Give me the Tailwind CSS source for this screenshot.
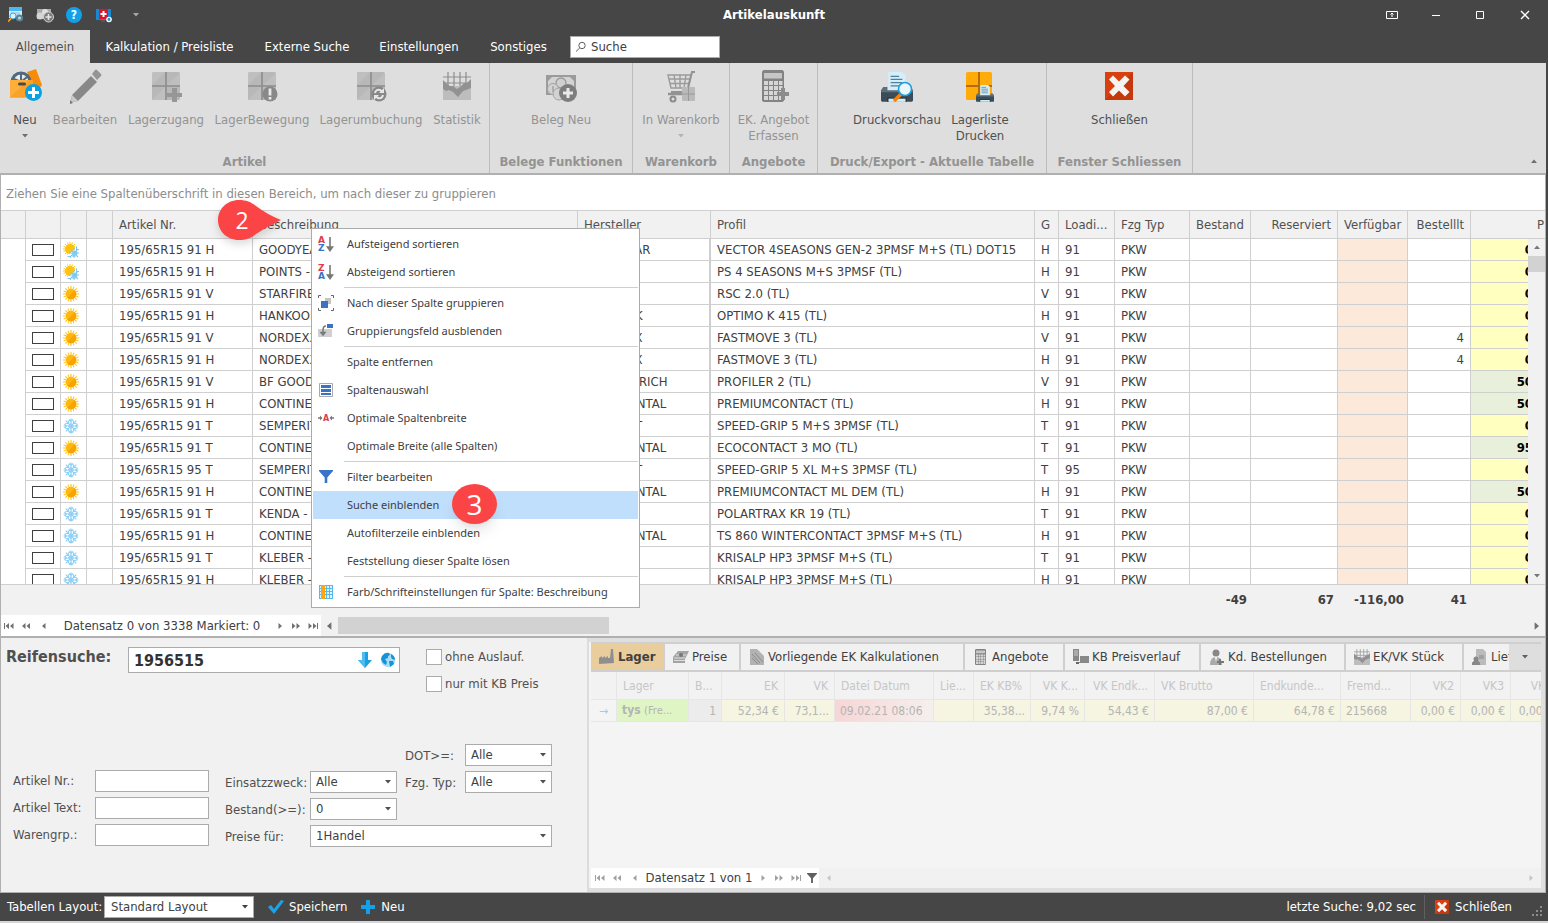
<!DOCTYPE html>
<html lang="de">
<head>
    <meta charset="UTF-8">
    <meta name="viewport" content="width=device-width, initial-scale=1.0">
    <title>Artikelauskunft</title>
    <script src="https://cdn.jsdelivr.net/npm/@tailwindcss/browser@4"></script>
</head>
<body class="flex h-screen flex-col overflow-hidden bg-[#464646] font-['DejaVu_Sans_Condensed','DejaVu_Sans',sans-serif] text-[13px] leading-4 text-[#404040]">

<!-- icon set -->
<svg class="hidden">
    <symbol id="caret" viewBox="0 0 8 4"><path d="M1 0h6L4 3.5z" fill="currentColor"/></symbol>
    <symbol id="sun" viewBox="0 0 16 16">
        <path d="M8 0v16M0 8h16M2.3 2.3l11.4 11.4M13.7 2.3L2.3 13.7M5 .6l6 14.8M11 .6L5 15.4M.6 5l14.8 6M15.4 5L.6 11" stroke="#ffc41c" stroke-width="1.1"/>
        <circle cx="8" cy="8" r="5.2" fill="#ffb80f"/><path d="M11.7 4.3a5.2 5.2 0 0 1-7.4 7.4z" fill="#f7a400"/>
    </symbol>
    <symbol id="flake" viewBox="0 0 16 16">
        <path d="M8 .5v15M.5 8h15M2.7 2.7l10.6 10.6M13.3 2.7L2.7 13.3M6 1.5l2 2 2-2M6 14.500l2-2 2 2M1.500 6l2 2-2 2M14.500 6l-2 2 2 2M2.500 5.500h3v-3M13.500 5.500h-3v-3M2.500 10.500h3v3M13.500 10.500h-3v3" stroke="#8fd0f5" stroke-width="1.200" fill="none"/>
        <circle cx="8" cy="8" r="2.200" fill="none" stroke="#8fd0f5"/>
    </symbol>
    <symbol id="allyear" viewBox="0 0 16 16">
        <path d="M7 0v12M0 7h12M2 2l9 9M12 2L2 12M4.500 .5l4 11M9.500 .5l-5 12M.5 4.500l11 4M.5 9.500L12 4.500" stroke="#ffc41c" stroke-width="1"/>
        <circle cx="7" cy="7" r="5" fill="#ffc20e"/>
        <path d="M16 2.500L3.500 15l.5 1h12z" fill="#fff"/>
        <path d="M11 6v10M6 11h10M7.500 14.500l7-7M8 8l7 7M13.500 4.500v3H16M4.500 14.500h3V16M9.500 14.500L11 13l1.500 1.500M14 9.500L12.500 11l1.500 1.500" stroke="#7cc8f0" fill="none" stroke-width="1.100"/>
    </symbol>
    <symbol id="boxes" viewBox="0 0 28 28">
        <rect width="28" height="28" rx="1.500" fill="#b8b8b8"/><path d="M0 13L13 0H1.500L0 1.500zM15 13L28 1v12zM0 28l13-13v13z" fill="#bfbfbf"/>
        <path d="M14 0v28M0 14h28" stroke="#8d8d8d" stroke-width="1.600"/>
    </symbol>
    <symbol id="first" viewBox="0 0 10 6"><path d="M.5 0v6" stroke="currentColor"/><path d="M5 0v6L1.500 3zM9.500 0v6L6 3z" fill="currentColor"/></symbol>
    <symbol id="fast" viewBox="0 0 8 6"><path d="M3.500 0v6L0 3zM8 0v6L4.500 3z" fill="currentColor"/></symbol>
    <symbol id="prev" viewBox="0 0 4 6"><path d="M3.500 0v6L0 3z" fill="currentColor"/></symbol>
    <symbol id="funnel" viewBox="0 0 14 14"><path d="M0 0h14v1L8.300 7.500V14H5.700V7.500L0 1z" fill="currentColor"/></symbol>
    <symbol id="closered" viewBox="0 0 28 28"><rect width="28" height="28" fill="#d8410f"/><path d="M28 0v28H0z" fill="#c4390c"/><path d="M4 7.500L8 3.500l6 6 6-6 4.500 4-6 6.500 6 6-4.500 4.500-6-6-6 6-4-4.500 6-6z" fill="#f4f4f4"/></symbol>
    <symbol id="calc" viewBox="0 0 24 32"><path d="M1.500 0h19L22 1.500v29L20.500 32h-19L0 30.500v-29z" fill="#838383"/><path d="M2 3h18v5.500H2z" fill="#c6c6c6"/><path d="M2 11h4v4H2zM7 11h4v4H7zM12 11h4v4h-4zM17 11h3.500v4H17zM2 16h4v4H2zM7 16h4v4H7zM12 16h4v4h-4zM17 16h3.500v4H17zM2 21h4v4H2zM7 21h4v4H7zM12 21h4v4h-4zM17 21h3.500v9H17zM2 26h4v4H2zM7 26h4v4H7zM12 26h4v4h-4z" fill="#d6d6d6"/></symbol>
    <symbol id="chart" viewBox="0 0 28 28"><path d="M0 5h28M0 11h28M5 0v14M11 0v14M17 0v14M23 0v14" stroke="#8d8d8d" stroke-width="1.200"/><path d="M0 14h28v14H0z" fill="#bdbdbd"/><path d="M0 8l4 4 3 2 3 0 4 3 3-2 4-4 3 0 4-4v9l-5 2-3 1-5 6-5-5-4-2-3 1-3-2z" fill="#929292"/></symbol>
    <symbol id="money" viewBox="0 0 30 26"><path d="M0 0h30v20H0z" fill="#9b9b9b"/><path d="M2 2h26v16H2z" fill="#d3d3d3"/><path d="M2 2l4 0-4 4M28 2l-4 0 4 4" fill="#9b9b9b"/><circle cx="15" cy="8" r="5" fill="#cfcfcf" stroke="#9b9b9b" stroke-width="1.300"/><circle cx="7" cy="14" r="5.500" fill="#d2d2d2" stroke="#a3a3a3"/><circle cx="13" cy="19" r="6" fill="#d2d2d2" stroke="#a3a3a3"/><path d="M7 11v6" stroke="#a3a3a3" stroke-width="1.500"/></symbol>
    <symbol id="printer" viewBox="0 0 30 30"><path d="M7 0h13l3 3v14H7z" fill="#d4effb"/><path d="M9 4h8M9 7h11M9 10h11M9 13h11" stroke="#4f7f99" stroke-width="1.200"/><path d="M2 14h4v3h18v-3h4l2 3v6H0v-6z" fill="#5b6f7e"/><path d="M0 19h30v8l-1 1H1l-1-1z" fill="#3b4c58"/><path d="M6 24h18v4H6z" fill="#22303a"/><path d="M7 25h16v3H7z" fill="#cfeefb"/></symbol>
</svg>

<!-- title bar -->
<header class="grid h-[30px] shrink-0 grid-cols-3 items-center text-white">
    <div class="flex items-center gap-3 pl-2">
        <button aria-label="Artikelsuche"><svg class="h-4 w-4" viewBox="0 0 16 16"><path d="M1 0h13v11H1z" fill="#cdeafa"/><path d="M1 0h13v4H1z" fill="#4bb8ee"/><path d="M3 6h9M3 8h9" stroke="#8ec5e4"/><circle cx="5" cy="9" r="3" fill="#d9f2ff" stroke="#3fa6df"/><path d="M3 11.500l-3 3" stroke="#f59a23" stroke-width="1.800"/><circle cx="11.500" cy="11" r="3.600" fill="#5f8091"/><circle cx="11.500" cy="11" r="1.500" fill="#b9d6e3"/></svg></button>
        <button aria-label="Beleg"><svg class="h-4 w-[18px]" viewBox="0 0 18 16"><path d="M1 2h14v10H1z" fill="#a9a9a9"/><circle cx="4" cy="9" r="3.500" fill="#d5d5d5"/><circle cx="9" cy="5" r="3" fill="#e0e0e0"/><circle cx="12.500" cy="10" r="5" fill="#7c7c7c" stroke="#d3d3d3"/><path d="M12.500 7v6M9.500 10h6" stroke="#e5e5e5" stroke-width="1.500"/></svg></button>
        <button aria-label="Hilfe" class="flex h-4 w-4 items-center justify-center rounded-full bg-[#12a1e8] text-[12px] font-bold leading-4">?</button>
        <button aria-label="Fernwartung" class="ml-0.5"><svg class="h-4 w-4" viewBox="0 0 16 16"><path d="M0 2h15v11H0z" fill="#1789d1"/><path d="M3 2h9v10H3z" fill="#e3122b"/><path d="M7.500 4v6M4.500 7h6" stroke="#fff" stroke-width="2"/><path d="M5 13h4v2H5z" fill="#555"/><circle cx="13" cy="12.500" r="2.800" fill="#fff"/><circle cx="13" cy="12.500" r="1.400" fill="#1c8fd8"/></svg></button>
        <button aria-label="Anpassen" class="ml-2 text-[#a8a8a8]"><svg class="h-1 w-2"><use href="#caret"/></svg></button>
    </div>
    <h1 class="text-center font-bold">Artikelauskunft</h1>
    <div class="flex items-center justify-end gap-[33px] pr-[17px]">
        <button aria-label="Menüband"><svg class="h-3 w-3" viewBox="0 0 12 12" fill="none" stroke="#fff"><path d="M.5 2.500h11v7H.5zM6 8V4M4.500 5.500L6 4l1.500 1.500"/></svg></button>
        <button aria-label="Minimieren"><svg class="h-3 w-2.5" viewBox="0 0 10 12" stroke="#fff"><path d="M1 6.500h8"/></svg></button>
        <button aria-label="Maximieren"><svg class="h-3 w-3" viewBox="0 0 12 12" fill="none" stroke="#fff"><path d="M2.500 2.500h7v7h-7z"/></svg></button>
        <button aria-label="Fenster schließen"><svg class="h-3 w-3" viewBox="0 0 12 12" stroke="#fff" stroke-width="1.400"><path d="M2 2l8 8M10 2l-8 8"/></svg></button>
    </div>
</header>

<!-- ribbon tabs -->
<nav class="flex h-[33px] shrink-0 items-stretch text-white">
    <button class="w-[90px] bg-[#dedede] text-[#505050]">Allgemein</button>
    <button class="w-[159px]">Kalkulation / Preisliste</button>
    <button class="w-[116px]">Externe Suche</button>
    <button class="w-[108px]">Einstellungen</button>
    <button class="w-[91px]">Sonstiges</button>
    <div class="ml-1.5 flex h-[22px] w-[150px] items-center self-center border border-[#ababab] bg-white px-1">
        <svg class="h-3 w-3 shrink-0" viewBox="0 0 12 12" fill="none" stroke="#606060"><circle cx="7" cy="4.500" r="3.200"/><path d="M4.700 7L1 10.500"/></svg>
        <input type="text" aria-label="Suche" value="Suche" class="ml-1 w-full min-w-0 text-[#404040] outline-none">
    </div>
</nav>

<!-- ribbon -->
<section class="mr-0.5 flex h-28 shrink-0 border-b-2 border-[#b0b0b0] bg-[#dedede] text-center text-[#939393]">
    <div class="flex w-[490px] flex-col border-r border-[#bcbcbc]">
        <div class="flex flex-1 items-start pt-[5px]">
            <button class="flex w-[50px] flex-col items-center text-[#505050]">
                <svg class="mb-2 h-9 w-9" viewBox="0 0 36 36"><path d="M20 4l9-3 6 16-6 8z" fill="#f78c0a"/><circle cx="14" cy="14" r="10.500" fill="#52697a"/><circle cx="14" cy="14" r="7.500" fill="#e3edf2"/><path d="M14 6v8l6 5M14 14l-7-3M14 14l6-5" stroke="#52697a" stroke-width="2" fill="none"/><path d="M3 12h23v18H3z" fill="#fdae3b"/><path d="M3 29L22 12h4v17z" fill="#f9a227"/><rect x="11" y="14.500" width="8" height="3" rx="1.500" fill="#4a4a4a"/><circle cx="26.500" cy="24.500" r="8.500" fill="#0d9fe3"/><path d="M26.500 19v11M21 24.500h11" stroke="#fff" stroke-width="3"/></svg>
                Neu<svg class="mt-1.5 h-1 w-2 text-[#707070]"><use href="#caret"/></svg>
            </button>
            <button class="flex w-[70px] flex-col items-center">
                <svg class="mb-2 h-9 w-9" viewBox="0 0 36 36"><path d="M5 27L24 8l6 6-19 19-7 1z" fill="#888"/><path d="M25 6l3-4q1-1 2 0l4 4q1 1 0 2l-4 4z" fill="#949494"/><path d="M5 27l6 6-7 1z" fill="#c9c9c9"/><path d="M3 32l3 3-3 1z" fill="#777"/></svg>
                Bearbeiten
            </button>
            <button class="flex w-[92px] flex-col items-center">
                <svg class="mb-2 h-9 w-9" viewBox="0 0 36 36"><use href="#boxes" x="4" y="4" width="28" height="28"/><path d="M24 20h5v5h5v4h-5v5h-5v-5h-5v-4h5z" fill="#979797"/></svg>
                Lagerzugang
            </button>
            <button class="flex w-[100px] flex-col items-center">
                <svg class="mb-2 h-9 w-9" viewBox="0 0 36 36"><use href="#boxes" x="4" y="4" width="28" height="28"/><circle cx="26" cy="26" r="7.500" fill="#888"/><path d="M26 20.500v7M26 29v2.500" stroke="#e8e8e8" stroke-width="2.800"/></svg>
                LagerBewegung
            </button>
            <button class="flex w-[118px] flex-col items-center">
                <svg class="mb-2 h-9 w-9" viewBox="0 0 36 36"><use href="#boxes" x="4" y="4" width="28" height="28"/><circle cx="26" cy="26" r="7.500" fill="#888"/><path d="M22 25q1-4 5-3l3 2M30 27q-1 4-5 3l-3-2" stroke="#e8e8e8" stroke-width="2" fill="none"/><path d="M31 20v5h-5zM21 32v-5h5z" fill="#e8e8e8"/></svg>
                Lagerumbuchung
            </button>
            <button class="flex w-[54px] flex-col items-center">
                <svg class="mb-2 h-9 w-9" viewBox="0 0 36 36"><use href="#chart" x="4" y="4" width="28" height="28"/></svg>
                Statistik
            </button>
        </div>
        <h2 class="pb-[3px] font-bold">Artikel</h2>
    </div>
    <div class="flex w-[143px] flex-col border-r border-[#bcbcbc]">
        <div class="flex flex-1 items-start justify-center pt-[5px]">
            <button class="flex flex-col items-center">
                <svg class="mb-2 h-9 w-9" viewBox="0 0 36 36"><use href="#money" x="3" y="7" width="30" height="26"/><circle cx="25" cy="25" r="9" fill="#7d7d7d"/><path d="M25 20v10M20 25h10" stroke="#e8e8e8" stroke-width="3"/></svg>
                Beleg Neu
            </button>
        </div>
        <h2 class="pb-[3px] font-bold">Belege Funktionen</h2>
    </div>
    <div class="flex w-[97px] flex-col border-r border-[#bcbcbc]">
        <div class="flex flex-1 items-start justify-center pt-[5px]">
            <button class="flex flex-col items-center">
                <svg class="mb-2 h-9 w-9" viewBox="0 0 36 36"><path d="M5 7h23l-3 13H8zM11 7l2 13M17 7v13M23 7l-2 13M6 11h21M7 15.500h19" fill="none" stroke="#9b9b9b" stroke-width="1.400"/><path d="M32 4h-3l-5 20H8" fill="none" stroke="#939393" stroke-width="2"/><path d="M5 26h21" stroke="#939393" stroke-width="2.500"/><circle cx="10" cy="31" r="2.500" fill="#ddd" stroke="#8b8b8b" stroke-width="2"/><rect x="19" y="19" width="13" height="14" rx="1" fill="#bababa"/><path d="M25.500 19v14M19 26h13" stroke="#999"/></svg>
                In Warenkorb<svg class="mt-1.5 h-1 w-2 text-[#b4b4b4]"><use href="#caret"/></svg>
            </button>
        </div>
        <h2 class="pb-[3px] font-bold">Warenkorb</h2>
    </div>
    <div class="flex w-[88px] flex-col border-r border-[#bcbcbc]">
        <div class="flex flex-1 items-start justify-center pt-[5px]">
            <button class="flex w-[80px] flex-col items-center">
                <svg class="mb-2 h-9 w-9" viewBox="0 0 36 36"><use href="#calc" x="6" y="2" width="24" height="32"/><path d="M25 20h4v4h4v4h-4v4h-4v-4h-4v-4h4z" fill="#8c8c8c"/></svg>
                EK. Angebot Erfassen
            </button>
        </div>
        <h2 class="pb-[3px] font-bold">Angebote</h2>
    </div>
    <div class="flex w-[229px] flex-col border-r border-[#bcbcbc]">
        <div class="flex flex-1 items-start pl-[35px] pt-[5px] text-[#505050]">
            <button class="flex w-[88px] flex-col items-center">
                <svg class="mb-2 h-9 w-9" viewBox="0 0 36 36"><use href="#printer" x="2" y="4" width="32" height="32"/><path d="M22 26l-7 7" stroke="#f5820b" stroke-width="3.500"/><circle cx="26" cy="21" r="6.500" fill="#e9f7fd" stroke="#1ba0de" stroke-width="1.600"/></svg>
                Druckvorschau
            </button>
            <button class="flex w-[78px] flex-col items-center">
                <svg class="mb-2 h-9 w-9" viewBox="0 0 36 36"><rect x="4" y="4" width="26" height="28" rx="1.500" fill="#ffab0a"/><path d="M17 4v28M4 18h26" stroke="#b46c0c" stroke-width="2"/><use href="#printer" x="14" y="17" width="18" height="18"/></svg>
                Lagerliste Drucken
            </button>
        </div>
        <h2 class="pb-[3px] font-bold">Druck/Export - Aktuelle Tabelle</h2>
    </div>
    <div class="flex w-[146px] flex-col border-r border-[#bcbcbc]">
        <div class="flex flex-1 items-start justify-center pt-[5px] text-[#505050]">
            <button class="flex flex-col items-center">
                <svg class="mb-2 h-9 w-9" viewBox="0 0 36 36"><use href="#closered" x="4" y="4" width="28" height="28"/></svg>
                Schließen
            </button>
        </div>
        <h2 class="pb-[3px] font-bold">Fenster Schliessen</h2>
    </div>
    <button aria-label="Menüband minimieren" class="ml-auto self-end pb-2.5 pr-2 text-[#707070]"><svg class="h-1 w-2 rotate-180"><use href="#caret"/></svg></button>
</section>

<!-- article grid -->
<main class="mr-0.5 flex min-h-0 flex-1 flex-col border-x border-b-2 border-[#b0b0b0] bg-[#f1f1f1]">
    <p class="h-[35px] shrink-0 bg-white pl-[5px] pt-[11px] text-[#8c8c8c]">Ziehen Sie eine Spaltenüberschrift in diesen Bereich, um nach dieser zu gruppieren</p>
    <div class="relative min-h-0 flex-1 overflow-hidden border-y border-[#cfcfcf] bg-white">
        <table class="w-[calc(100%+14px)] table-fixed border-separate border-spacing-0">
            <colgroup>
                <col class="w-[25px]"><col class="w-[35px]"><col class="w-[26px]"><col class="w-[26px]"><col class="w-[140px]"><col><col class="w-[133px]"><col class="w-[324px]"><col class="w-[24px]"><col class="w-[56px]"><col class="w-[75px]"><col class="w-[61px]"><col class="w-[87px]"><col class="w-[70px]"><col class="w-[63px]"><col class="w-[88px]">
            </colgroup>
            <thead>
                <tr class="h-7 bg-[#f1f1f1] text-left text-[#505050] [&>th]:border-b [&>th]:border-r [&>th]:border-[#cfcfcf] [&>th]:px-1.5 [&>th]:font-normal [&>th]:whitespace-nowrap">
                    <th></th><th></th><th></th><th></th><th>Artikel Nr.</th><th>Beschreibung</th><th class="border-r-2">Hersteller</th><th>Profil</th><th>G</th><th>Loadi...</th><th>Fzg Typ</th><th>Bestand</th><th class="text-right">Reserviert</th><th class="text-right">Verfügbar</th><th class="text-right">Bestelllt</th><th class="text-right"><span class="pr-2">P</span></th>
                </tr>
            </thead>
            <tbody id="articles"></tbody>
        </table>
        <div class="absolute bottom-0 right-0 top-7 flex w-[17px] flex-col items-center justify-between bg-[#f1f1f1] py-1.5 text-[#777]">
            <svg class="h-1 w-2 rotate-180"><use href="#caret"/></svg>
            <div class="absolute top-[17px] h-4 w-full bg-[#d2d2d2]"></div>
            <svg class="h-1 w-2"><use href="#caret"/></svg>
        </div>
    </div>
    <div class="flex h-[30px] shrink-0 items-center justify-end pr-[74px] text-right font-bold">
        <span class="w-[61px] pr-1">-49</span><span class="w-[87px] pr-1">67</span><span class="w-[70px] pr-1">-116,00</span><span class="w-[63px] pr-1">41</span>
    </div>
    <div class="flex h-[21px] shrink-0 items-center text-[#707070]">
        <div class="flex h-full w-[320px] items-center bg-white pl-[3px]">
            <button aria-label="Erster"><svg class="h-1.5 w-2.5"><use href="#first"/></svg></button>
            <button aria-label="Seite zurück" class="ml-2"><svg class="h-1.5 w-2"><use href="#fast"/></svg></button>
            <button aria-label="Zurück" class="ml-3"><svg class="h-1.5 w-1"><use href="#prev"/></svg></button>
            <span class="flex-1 text-center text-[#404040]">Datensatz 0 von 3338 Markiert: 0</span>
            <button aria-label="Weiter"><svg class="h-1.5 w-1 rotate-180"><use href="#prev"/></svg></button>
            <button aria-label="Seite vor" class="ml-2.5"><svg class="h-1.5 w-2 rotate-180"><use href="#fast"/></svg></button>
            <button aria-label="Letzter" class="ml-2 mr-[3px]"><svg class="h-1.5 w-2.5 rotate-180"><use href="#first"/></svg></button>
        </div>
        <svg class="ml-1.5 h-2 w-[5px]"><use href="#prev"/></svg>
        <div class="ml-1.5 h-[17px] w-[271px] bg-[#d2d2d2]"></div>
        <svg class="ml-auto mr-1.5 h-2 w-[5px] rotate-180"><use href="#prev"/></svg>
    </div>
</main>

<div class="mr-0.5 flex h-[255px] shrink-0 border-x border-b border-[#b0b0b0] bg-[#f1f1f1] text-[#505050]">
    <!-- search form -->
    <form class="flex w-[588px] shrink-0 flex-col border-r-2 border-[#dcdcdc]">
        <div class="flex pl-[5px] pt-[9px]">
            <label for="tyre" class="w-[122px] text-[16px] font-bold leading-5">Reifensuche:</label>
            <div class="flex h-[26px] w-[272px] items-center gap-2 border border-[#ababab] bg-white pl-[5px] pr-[3px]">
                <input id="tyre" type="text" value="1956515" class="min-w-0 flex-1 text-[16px] font-bold text-[#333] outline-none">
                <svg class="h-4 w-3.5" viewBox="0 0 14 16"><path d="M4 0h6v8h4l-7 8-7-8h4z" fill="#1d9fe4"/><path d="M4 0h3v16L0 8h4z" fill="#4dbdf2"/></svg>
                <svg class="h-4 w-4" viewBox="0 0 16 16"><circle cx="8" cy="8" r="7.200" fill="#a9dcf6"/><path d="M2 4q3-4 7-3l1 2-2 1 0 2-3 1 2 3-1 3-3-2-2-4zM11 2q4 2 4 6l-3-1-1-2zM9 9l4 0 1 3-4 3z" fill="#1493d6"/></svg>
            </div>
            <div class="ml-[26px] flex flex-col gap-[11px] pt-0.5">
                <label class="flex h-4 items-center gap-[3px]"><input type="checkbox" class="h-4 w-4 appearance-none border border-[#ababab] bg-white">ohne Auslauf.</label>
                <label class="flex h-4 items-center gap-[3px]"><input type="checkbox" class="h-4 w-4 appearance-none border border-[#ababab] bg-white">nur mit KB Preis</label>
            </div>
        </div>
        <div class="mt-[52px] flex items-end pl-3">
            <div class="mb-px grid grid-cols-[82px_114px] items-center gap-y-[5px] [&>input]:h-[22px] [&>input]:border [&>input]:border-[#ababab] [&>input]:bg-white [&>input]:px-1">
                <label for="nr">Artikel Nr.:</label><input id="nr" type="text">
                <label for="txt">Artikel Text:</label><input id="txt" type="text">
                <label for="grp">Warengrp.:</label><input id="grp" type="text">
            </div>
            <div class="ml-4 grid grid-cols-[85px_87px_68px_87px] items-center gap-y-[5px] [&>label]:pt-0.5 [&_select]:h-[22px] [&_select]:w-full [&_select]:appearance-none [&_select]:border [&_select]:border-[#ababab] [&_select]:bg-white [&_select]:px-[5px] [&_select]:text-[#404040] [&_svg]:absolute [&_svg]:right-[5px] [&_svg]:top-[9px] [&_svg]:h-1 [&_svg]:w-2">
                <label for="dot" class="col-start-3 pl-2">DOT&gt;=:</label>
                <div class="relative"><select id="dot"><option>Alle</option></select><svg><use href="#caret"/></svg></div>
                <label for="use" class="col-start-1">Einsatzzweck:</label>
                <div class="relative"><select id="use"><option>Alle</option></select><svg><use href="#caret"/></svg></div>
                <label for="typ" class="pl-2">Fzg. Typ:</label>
                <div class="relative"><select id="typ"><option>Alle</option></select><svg><use href="#caret"/></svg></div>
                <label for="stock">Bestand(&gt;=):</label>
                <div class="relative"><select id="stock"><option>0</option></select><svg><use href="#caret"/></svg></div>
                <label for="price" class="col-start-1">Preise für:</label>
                <div class="relative col-span-3"><select id="price"><option>1Handel</option></select><svg><use href="#caret"/></svg></div>
            </div>
        </div>
    </form>

    <!-- details -->
    <section class="flex min-w-0 flex-1 flex-col border-b-4 border-r-4 border-t-4 border-[#dfdfdf] bg-[#f4f4f4] pl-0.5">
        <div class="flex h-[30px] shrink-0 border-y-2 border-[#cfcfcf] bg-[#f1f1f1] text-[#404040]">
            <div class="flex min-w-0 flex-1 overflow-hidden whitespace-nowrap [&>button]:flex [&>button]:shrink-0 [&>button]:items-center [&>button]:gap-[3px] [&>button]:border-r-2 [&>button]:border-[#cfcfcf] [&>button]:pl-2 [&_svg]:h-4 [&_svg]:w-4">
                <button class="w-[74px] bg-[#e9cd9c] font-bold"><svg viewBox="0 0 16 16"><path d="M0 15V9l3-2v2l3-2v2l3-2v2h2l1-9h2l1 14z" fill="#8f8f8f"/></svg>Lager</button>
                <button class="w-[76px]"><svg viewBox="0 0 16 16"><path d="M0 8l5-6h11l-4 8v4H0z" fill="#a4a4a4"/><path d="M1 9h11M1 11.500h11M3 6h10" stroke="#ddd"/><circle cx="8" cy="6" r="2" fill="#777"/></svg>Preise</button>
                <button class="w-[224px]"><svg viewBox="0 0 16 16"><path d="M1 0h7l7 7v9H1z" fill="#b2b2b2"/><path d="M3 5l8 9M3 9l6 6M6 4l8 9" stroke="#8b8b8b"/></svg>Vorliegende EK Kalkulationen</button>
                <button class="w-[100px]"><svg><use href="#calc"/></svg>Angebote</button>
                <button class="w-[136px]"><svg viewBox="0 0 16 16"><path d="M0 0h6v12H0zM7 7h9v6H7zM6 13h10v1H6z" fill="#888"/><path d="M1 2h4M1 4h4M1 6h4" stroke="#ccc"/><path d="M3 13h3v2H3z" fill="#666"/></svg>KB Preisverlauf</button>
                <button class="w-[145px]"><svg viewBox="0 0 16 16"><circle cx="7" cy="4" r="3.500" fill="#888"/><path d="M1 16q0-8 6-8t6 8z" fill="#aaa"/><path d="M6 8h2l-1 5z" fill="#fff"/><path d="M11 10v6M8 13h7" stroke="#777" stroke-width="2"/></svg>Kd. Bestellungen</button>
                <button class="w-[118px]"><svg><use href="#chart"/></svg>EK/VK Stück</button>
                <button class="w-[110px]"><svg viewBox="0 0 16 16"><path d="M4 0h7l3 3v13H4z" fill="#bbb"/><circle cx="4" cy="10" r="2.500" fill="#888"/><path d="M0 16q0-4 4-4t4 4zM7 7h5M7 9h5" fill="#888" stroke="#888"/></svg>Lieferanten</button>
            </div>
            <button aria-label="Weitere Register" class="flex w-8 items-center justify-center bg-[#dedede] text-[#606060]"><svg class="h-1 w-2"><use href="#caret"/></svg></button>
        </div>
        <div class="min-h-0 flex-1 overflow-hidden">
            <table class="w-[calc(100%+18px)] table-fixed border-separate border-spacing-0 whitespace-nowrap text-left text-[12px] text-[#b4b4b4]">
                <colgroup>
                    <col class="w-[26px]"><col class="w-[72px]"><col class="w-[33px]"><col class="w-[63px]"><col class="w-[50px]"><col class="w-[99px]"><col class="w-[40px]"><col class="w-[57px]"><col class="w-[54px]"><col class="w-[70px]"><col class="w-[99px]"><col class="w-[87px]"><col class="w-[70px]"><col class="w-[50px]"><col class="w-[50px]"><col>
                </colgroup>
                <thead>
                    <tr class="h-7 bg-[#f2f2f2] text-[#c6c6c6] [&>th]:border-b [&>th]:border-r [&>th]:border-[#e6e6e6] [&>th]:px-1.5 [&>th]:font-normal">
                        <th></th><th>Lager</th><th>B...</th><th class="text-right">EK</th><th class="text-right">VK</th><th>Datei Datum</th><th>Lie...</th><th>EK KB%</th><th class="text-right">VK K...</th><th class="text-right">VK Endk...</th><th>VK Brutto</th><th>Endkunde...</th><th>Fremd...</th><th class="text-right">VK2</th><th class="text-right">VK3</th><th class="text-right">VK4</th>
                    </tr>
                </thead>
                <tbody>
                    <tr class="h-[22px] bg-[#f5f5e2] text-right [&>td]:border-b [&>td]:border-r [&>td]:border-[#e6e6e6] [&>td]:px-[5px]">
                        <td class="bg-[#f4f4f4] text-center text-[#a8c8e6]">→</td><td class="bg-[#e0f5c4] text-left"><b>tys</b> <span class="text-[11px]">(Fre...</span></td><td class="bg-[#ececec]">1</td><td>52,34 €</td><td>73,1...</td><td class="bg-gradient-to-r from-[#f6d6d6] to-[#f4f0ee] text-left">09.02.21 08:06</td><td></td><td>35,38...</td><td>9,74 %</td><td>54,43 €</td><td>87,00 €</td><td>64,78 €</td><td class="text-left">215668</td><td>0,00 €</td><td>0,00 €</td><td>0,00 €</td>
                    </tr>
                </tbody>
            </table>
        </div>
        <div class="flex h-5 shrink-0 items-center bg-[#f1f1f1] text-[#a0a0a0]">
            <div class="flex h-full w-[228px] items-center bg-white pl-1">
                <button aria-label="Erster"><svg class="h-1.5 w-2.5"><use href="#first"/></svg></button>
                <button aria-label="Seite zurück" class="ml-2"><svg class="h-1.5 w-2"><use href="#fast"/></svg></button>
                <button aria-label="Zurück" class="ml-3"><svg class="h-1.5 w-1"><use href="#prev"/></svg></button>
                <span class="flex-1 whitespace-nowrap text-center text-[#404040]">Datensatz 1 von 1</span>
                <button aria-label="Weiter"><svg class="h-1.5 w-1 rotate-180"><use href="#prev"/></svg></button>
                <button aria-label="Seite vor" class="ml-2.5"><svg class="h-1.5 w-2 rotate-180"><use href="#fast"/></svg></button>
                <button aria-label="Letzter" class="ml-2"><svg class="h-1.5 w-2.5 rotate-180"><use href="#first"/></svg></button>
                <button aria-label="Filter" class="ml-1.5 mr-0.5 text-[#606060]"><svg class="h-2.5 w-2.5"><use href="#funnel"/></svg></button>
            </div>
            <svg class="ml-2 h-1.5 w-1 text-[#c4c4c4]"><use href="#prev"/></svg>
            <svg class="ml-auto mr-2 h-1.5 w-1 rotate-180 text-[#c4c4c4]"><use href="#prev"/></svg>
        </div>
    </section>
</div>

<!-- status bar -->
<footer class="flex h-[30px] shrink-0 items-center border-b-2 border-[#d6d6d6] pl-[7px] text-white">
    <label for="layout" class="w-[97px] whitespace-nowrap">Tabellen Layout:</label>
    <div class="relative w-[150px] text-[#404040]">
        <select id="layout" class="h-[22px] w-full appearance-none border border-[#ababab] bg-white px-1.5"><option>Standard Layout</option></select>
        <svg class="absolute right-[5px] top-[9px] h-1 w-2"><use href="#caret"/></svg>
    </div>
    <button class="ml-3.5 flex items-center gap-[5px]"><svg class="h-3.5 w-4" viewBox="0 0 16 14"><path d="M0 7l3-2 3 4 7-9 3 1L6 14z" fill="#19a4e8"/></svg>Speichern</button>
    <button class="ml-3.5 flex items-center gap-1.5"><svg class="h-3.5 w-3.5" viewBox="0 0 14 14"><path d="M5 0h4v5h5v4H9v5H5V9H0V5h5z" fill="#12a1e8"/></svg>Neu</button>
    <span class="ml-auto pr-2">letzte Suche: 9,02 sec</span>
    <button class="flex h-6 items-center gap-1.5 border-l border-[#606060] pl-2.5"><svg class="h-3.5 w-3.5"><use href="#closered"/></svg>Schließen</button>
    <svg class="ml-[18px] mr-1 mt-2 h-3.5 w-3.5" viewBox="0 0 14 14" fill="#8c8c8c"><path d="M10 2h2v2h-2zM6 6h2v2H6zM10 6h2v2h-2zM2 10h2v2H2zM6 10h2v2H6zM10 10h2v2h-2z"/></svg>
</footer>

<!-- column context menu -->
<div role="menu" class="absolute left-[311px] top-[228px] w-[329px] border border-[#ababab] bg-white p-px font-['Noto_Sans','Open_Sans',sans-serif] text-[11px] [&>button]:grid [&>button]:h-7 [&>button]:w-full [&>button]:grid-cols-[34px_1fr] [&>button]:items-center [&>button]:text-left [&>hr]:mb-px [&>hr]:ml-[31px] [&>hr]:mt-px [&>hr]:border-[#cfcfcf] [&_svg]:ml-[5px] [&_svg]:h-4 [&_svg]:w-4">
    <button role="menuitem"><svg viewBox="0 0 16 16"><path d="M12 1v12M9.500 11l2.500 3.500L14.500 11z" stroke="#777" stroke-width="1.600" fill="#777"/><text x="0" y="7" font-size="9" font-weight="bold" font-family="DejaVu Sans" fill="#e03a4b">A</text><text x="0" y="15" font-size="9" font-weight="bold" font-family="DejaVu Sans" fill="#3873c6">Z</text></svg>Aufsteigend sortieren</button>
    <button role="menuitem"><svg viewBox="0 0 16 16"><path d="M12 1v12M9.500 11l2.500 3.500L14.500 11z" stroke="#777" stroke-width="1.600" fill="#777"/><text x="0" y="7" font-size="9" font-weight="bold" font-family="DejaVu Sans" fill="#e03a4b">Z</text><text x="0" y="15" font-size="9" font-weight="bold" font-family="DejaVu Sans" fill="#3873c6">A</text></svg>Absteigend sortieren</button>
    <hr>
    <button role="menuitem"><svg viewBox="0 0 16 16"><path d="M3 .5H.5V3M13 .5h2.500V3M3 15.500H.5V13M13 15.500h2.500V13" fill="none" stroke="#666"/><path d="M7 3h6v6H7z" fill="#c4c4c4"/><path d="M3 6h7v7H3z" fill="#3873c6"/></svg>Nach dieser Spalte gruppieren</button>
    <button role="menuitem"><svg viewBox="0 0 16 16"><path d="M0 6h14v8H0z" fill="#d0d0d0"/><path d="M9 1h6v4H9z" fill="#3873c6"/><path d="M8 3q-3 0-3 4v3M3 9.500l2 2.500 2-2.500z" fill="none" stroke="#777" stroke-width="1.500"/></svg>Gruppierungsfeld ausblenden</button>
    <hr>
    <button role="menuitem"><i></i>Spalte entfernen</button>
    <button role="menuitem"><svg viewBox="0 0 16 16"><path d="M1.500 1.500h13v13h-13z" fill="#fff" stroke="#aaa"/><path d="M3 3h10v3H3zM3 7h10v3H3zM3 11h10v2H3z" fill="#3873c6"/></svg>Spaltenauswahl</button>
    <button role="menuitem"><svg viewBox="0 0 16 16"><path d="M0 8h3M13 8h3" stroke="#777" stroke-width="1.500"/><path d="M2 5.500L4.500 8 2 10.500zM14 5.500L11.500 8l2.500 2.500z" fill="#777"/><text x="8" y="11" font-size="8" font-weight="bold" text-anchor="middle" font-family="DejaVu Sans" fill="#e03a4b">A</text></svg>Optimale Spaltenbreite</button>
    <button role="menuitem"><i></i>Optimale Breite (alle Spalten)</button>
    <hr>
    <button role="menuitem"><svg viewBox="-1 -1 16 16" class="text-[#3873c6]"><path d="M0 0h14v1L8.300 7.500V13H5.700V7.500L0 1z" fill="currentColor"/></svg>Filter bearbeiten</button>
    <button role="menuitem" class="bg-[#bfdffd]"><i></i>Suche einblenden</button>
    <button role="menuitem"><i></i>Autofilterzeile einblenden</button>
    <button role="menuitem"><i></i>Feststellung dieser Spalte lösen</button>
    <hr>
    <button role="menuitem"><svg viewBox="0 0 16 16"><path d="M1 1h14v14H1z" fill="#dff3fd"/><path d="M1.500 1v14M8.500 1v14M11.500 1v14M14.500 1v14M1 1.500h14M1 4.500h14M1 7.500h14M1 10.500h14M1 14.500h14" stroke="#56b9ea"/><path d="M3 1h4v14H3z" fill="#ffa514"/></svg>Farb/Schrifteinstellungen für Spalte: Beschreibung</button>
</div>

<!-- step markers -->
<div class="absolute left-[218px] top-[200px] flex h-10 w-[48px] items-center justify-center font-['Open_Sans',sans-serif] text-[23px] font-medium text-white">
    <svg class="absolute left-0 top-0 h-10 w-[63px] overflow-visible drop-shadow-lg" viewBox="0 0 63 40"><path d="M21 0C9 0 0 9 0 20s9 20 21 20c7 0 12-2 17-6Q50 26 63 20 50 15 38 6C33 2 28 0 21 0z" fill="#fb4445"/></svg>
    <span class="relative">2</span>
</div>
<div class="absolute left-[452px] top-[484px] flex h-10 w-[45px] items-center justify-center rounded-[50%] bg-[#fb4445] font-['Open_Sans',sans-serif] text-[28px] font-medium text-white shadow-lg">3</div>

<script>
    // season, size, make, profile, speed index, load index, ordered, stock price
    const articles = [
        ["allyear", "195/65R15 91 H", "GOODYEAR", "VECTOR 4SEASONS GEN-2 3PMSF M+S (TL) DOT15", "H", "91", "", "0"],
        ["allyear", "195/65R15 91 H", "POINTS", "PS 4 SEASONS M+S 3PMSF (TL)", "H", "91", "", "0"],
        ["sun", "195/65R15 91 V", "STARFIRE", "RSC 2.0 (TL)", "V", "91", "", "0"],
        ["sun", "195/65R15 91 H", "HANKOOK", "OPTIMO K 415 (TL)", "H", "91", "", "0"],
        ["sun", "195/65R15 91 V", "NORDEXX", "FASTMOVE 3 (TL)", "V", "91", "4", "0"],
        ["sun", "195/65R15 91 H", "NORDEXX", "FASTMOVE 3 (TL)", "H", "91", "4", "0"],
        ["sun", "195/65R15 91 V", "BF GOODRICH", "PROFILER 2 (TL)", "V", "91", "", "50"],
        ["sun", "195/65R15 91 H", "CONTINENTAL", "PREMIUMCONTACT (TL)", "H", "91", "", "50"],
        ["flake", "195/65R15 91 T", "SEMPERIT", "SPEED-GRIP 5 M+S 3PMSF (TL)", "T", "91", "", "0"],
        ["sun", "195/65R15 91 T", "CONTINENTAL", "ECOCONTACT 3 MO (TL)", "T", "91", "", "95"],
        ["flake", "195/65R15 95 T", "SEMPERIT", "SPEED-GRIP 5 XL M+S 3PMSF (TL)", "T", "95", "", "0"],
        ["sun", "195/65R15 91 H", "CONTINENTAL", "PREMIUMCONTACT ML DEM (TL)", "H", "91", "", "50"],
        ["flake", "195/65R15 91 T", "KENDA", "POLARTRAX KR 19 (TL)", "T", "91", "", "0"],
        ["flake", "195/65R15 91 H", "CONTINENTAL", "TS 860 WINTERCONTACT 3PMSF M+S (TL)", "H", "91", "", "0"],
        ["flake", "195/65R15 91 T", "KLEBER", "KRISALP HP3 3PMSF M+S (TL)", "T", "91", "", "0"],
        ["flake", "195/65R15 91 H", "KLEBER", "KRISALP HP3 3PMSF M+S (TL)", "H", "91", "", "0"],
    ];

    const cell = "border-b border-r border-[#cfcfcf] px-1.5 whitespace-nowrap overflow-hidden";

    document.getElementById("articles").innerHTML = articles.map(([season, size, make, profile, speed, load, ordered, price]) => `
        <tr class="h-[22px]">
            <td class="border-r border-[#cfcfcf]"></td>
            <td class="${cell}"><input type="checkbox" aria-label="Markieren" class="block h-3 w-[22px] appearance-none border border-[#404040] bg-white"></td>
            <td class="border-b border-r border-[#cfcfcf] pl-0.5"><svg class="block h-4 w-4"><use href="#${season}"/></svg></td>
            <td class="${cell}"></td>
            <td class="${cell}">${size}</td>
            <td class="${cell}">${make} -</td>
            <td class="border-b border-r-2 border-[#cfcfcf] px-1.5 whitespace-nowrap">${make}</td>
            <td class="${cell}">${profile}</td>
            <td class="${cell}">${speed}</td>
            <td class="${cell}">${load}</td>
            <td class="${cell}">PKW</td>
            <td class="${cell}"></td>
            <td class="${cell}"></td>
            <td class="${cell} bg-[#fce9da]"></td>
            <td class="${cell} text-right">${ordered}</td>
            <td class="border-b border-[#cfcfcf] pr-[26px] text-right font-bold text-black ${price === "0" ? "bg-[#ffffc0]" : "bg-[#e8f0dc]"}">${price}</td>
        </tr>`).join("");
</script>
</body>
</html>
